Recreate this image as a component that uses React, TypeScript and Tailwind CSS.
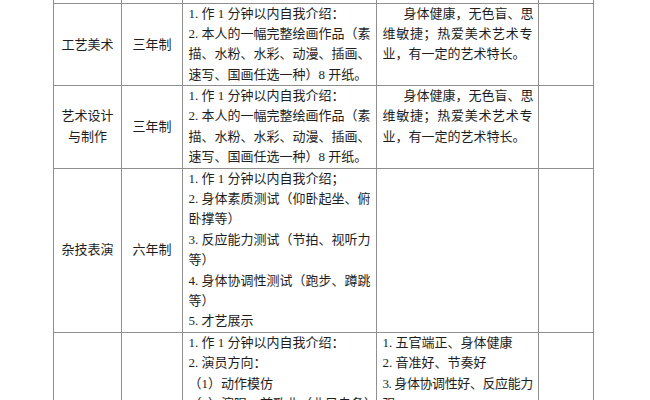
const font = { fontFamily: '"Liberation Serif", "Noto Sans CJK SC", serif' }

type Line = { t: string; j?: boolean; cls?: string }

function Lines({ lines }: { lines: Line[] }) {
  return (
    <div>
      {lines.map((l, i) => (
        <div
          key={i}
          className={`h-[20.4px] leading-[20.4px] whitespace-nowrap ${l.j ? '[text-align-last:justify] text-justify' : ''} ${l.cls ?? ''}`}
        >
          {l.t}
        </div>
      ))}
    </div>
  )
}

const td = 'border border-[#8f8f8f] p-0 align-top'
const tdText = 'border border-[#8f8f8f] py-0 px-[5.5px] align-top'
const tdCenter = 'border border-[#8f8f8f] p-0 align-middle text-center'

const artReq: Line[] = [
  { t: '1. 作 1 分钟以内自我介绍：' },
  { t: '2. 本人的一幅完整绘画作品（素', j: true },
  { t: '描、水粉、水彩、动漫、插画、', j: true },
  { t: '速写、国画任选一种）8 开纸。' },
]

const artCond: Line[] = [
  { t: '身体健康，无色盲、思', j: true, cls: 'pl-[21px]' },
  { t: '维敏捷；热爱美术艺术专', j: true },
  { t: '业，有一定的艺术特长。' },
]

const acroReq: Line[] = [
  { t: '1. 作 1 分钟以内自我介绍；' },
  { t: '2. 身体素质测试（仰卧起坐、俯', j: true },
  { t: '卧撑等）' },
  { t: '3. 反应能力测试（节拍、视听力', j: true },
  { t: '等）' },
  { t: '4. 身体协调性测试（跑步、蹲跳', j: true },
  { t: '等）' },
  { t: '5. 才艺展示' },
]

const actReq: Line[] = [
  { t: '1. 作 1 分钟以内自我介绍：' },
  { t: '2. 演员方向：' },
  { t: '（1）动作模仿' },
  { t: '（2）演唱一首歌曲（曲目自备）' },
]

const actCond: Line[] = [
  { t: '1. 五官端正、身体健康' },
  { t: '2. 音准好、节奏好' },
  { t: '3. 身体协调性好、反应能力', j: true, cls: 'tracking-[-0.4px]' },
  { t: '强' },
]

export default function App() {
  return (
    <div className="h-[400px] w-[650px] overflow-hidden bg-white text-[13px] text-[#1e1e1e]" style={font}>
      <table className="ml-[53px] w-[540px] table-fixed border-collapse [border-top-style:hidden]">
        <colgroup>
          <col className="w-[68px]" />
          <col className="w-[61px]" />
          <col className="w-[194px]" />
          <col className="w-[162px]" />
          <col className="w-[55px]" />
        </colgroup>
        <tbody>
          <tr className="h-[3px]">
            <td className={td} />
            <td className={td} />
            <td className={td} />
            <td className={td} />
            <td className={td} />
          </tr>
          <tr>
            <td className={tdCenter}>工艺美术</td>
            <td className={tdCenter}>三年制</td>
            <td className={tdText}><Lines lines={artReq} /></td>
            <td className={tdText}><Lines lines={artCond} /></td>
            <td className={td} />
          </tr>
          <tr>
            <td className={tdCenter}>
              <div className="leading-[20.4px]">艺术设计</div>
              <div className="leading-[20.4px]">与制作</div>
            </td>
            <td className={tdCenter}>三年制</td>
            <td className={tdText}><Lines lines={artReq} /></td>
            <td className={tdText}><Lines lines={artCond} /></td>
            <td className={td} />
          </tr>
          <tr>
            <td className={tdCenter}>杂技表演</td>
            <td className={tdCenter}>六年制</td>
            <td className={tdText}><Lines lines={acroReq} /></td>
            <td className={td} />
            <td className={td} />
          </tr>
          <tr>
            <td className={tdCenter} />
            <td className={tdCenter} />
            <td className={tdText}><Lines lines={actReq} /></td>
            <td className={tdText}><Lines lines={actCond} /></td>
            <td className={td} />
          </tr>
        </tbody>
      </table>
    </div>
  )
}
